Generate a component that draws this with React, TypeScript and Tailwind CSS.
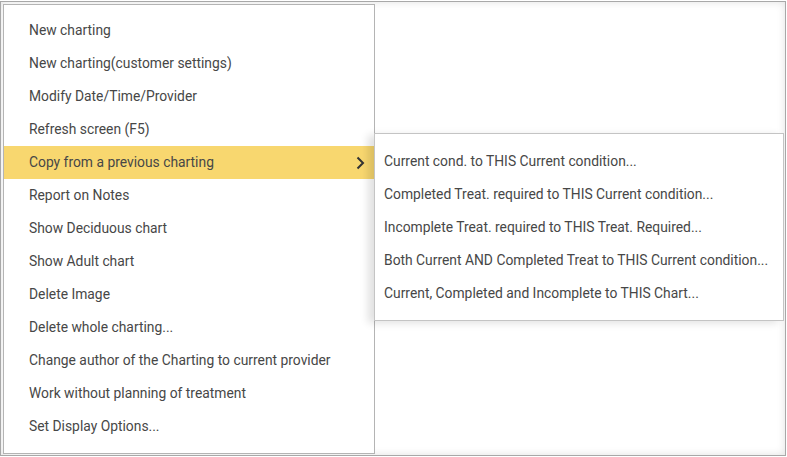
import React from "react";

const items = [
  "New charting",
  "New charting(customer settings)",
  "Modify Date/Time/Provider",
  "Refresh screen (F5)",
  "Copy from a previous charting",
  "Report on Notes",
  "Show Deciduous chart",
  "Show Adult chart",
  "Delete Image",
  "Delete whole charting...",
  "Change author of the Charting to current provider",
  "Work without planning of treatment",
  "Set Display Options...",
];

const subItems = [
  "Current cond. to THIS Current condition...",
  "Completed Treat. required to THIS Current condition...",
  "Incomplete Treat. required to THIS Treat. Required...",
  "Both Current AND Completed Treat to THIS Current condition...",
  "Current, Completed and Incomplete to THIS Chart...",
];

export default function App() {
  return (
    <div
      className="w-[787px] h-[457px] bg-white pt-[1px]"
      style={{ fontFamily: "Roboto, 'Liberation Sans', sans-serif" }}
    >
      <div className="relative w-[786px] h-[455px] border border-[#a8a8a8] bg-white shadow-[inset_0_0_8px_rgba(0,0,0,0.12)]">
        <div className="ml-[2px] mt-[2px] w-[372px] h-[450px] border border-[#b4b4b4] bg-white pt-[9px] pb-[10px]">
          {items.map((t, i) => {
            const active = i === 4;
            return (
              <div
                key={t}
                className={
                  "flex items-center h-[33px] pl-[25px] pr-[8px] text-[13.85px] text-[#474747] " +
                  (active ? "bg-[#f8d76f]" : "")
                }
              >
                <span className="flex-1">{t}</span>
                {active && (
                  <svg width="10" height="14" viewBox="0 0 10 14" className="mr-[1px]">
                    <path d="M2.5 1.5 L8 7 L2.5 12.5" fill="none" stroke="#333" strokeWidth="2" />
                  </svg>
                )}
              </div>
            );
          })}
        </div>
        <div className="absolute left-[373px] top-[131px] w-[410px] h-[188px] border border-[#c4c4c4] bg-white pt-[11px] shadow-[-6px_2px_8px_rgba(0,0,0,0.12)]">
          {subItems.map((t) => (
            <div key={t} className="flex items-center h-[33px] pl-[9px] text-[13.85px] text-[#474747]">
              {t}
            </div>
          ))}
        </div>
      </div>
    </div>
  );
}
